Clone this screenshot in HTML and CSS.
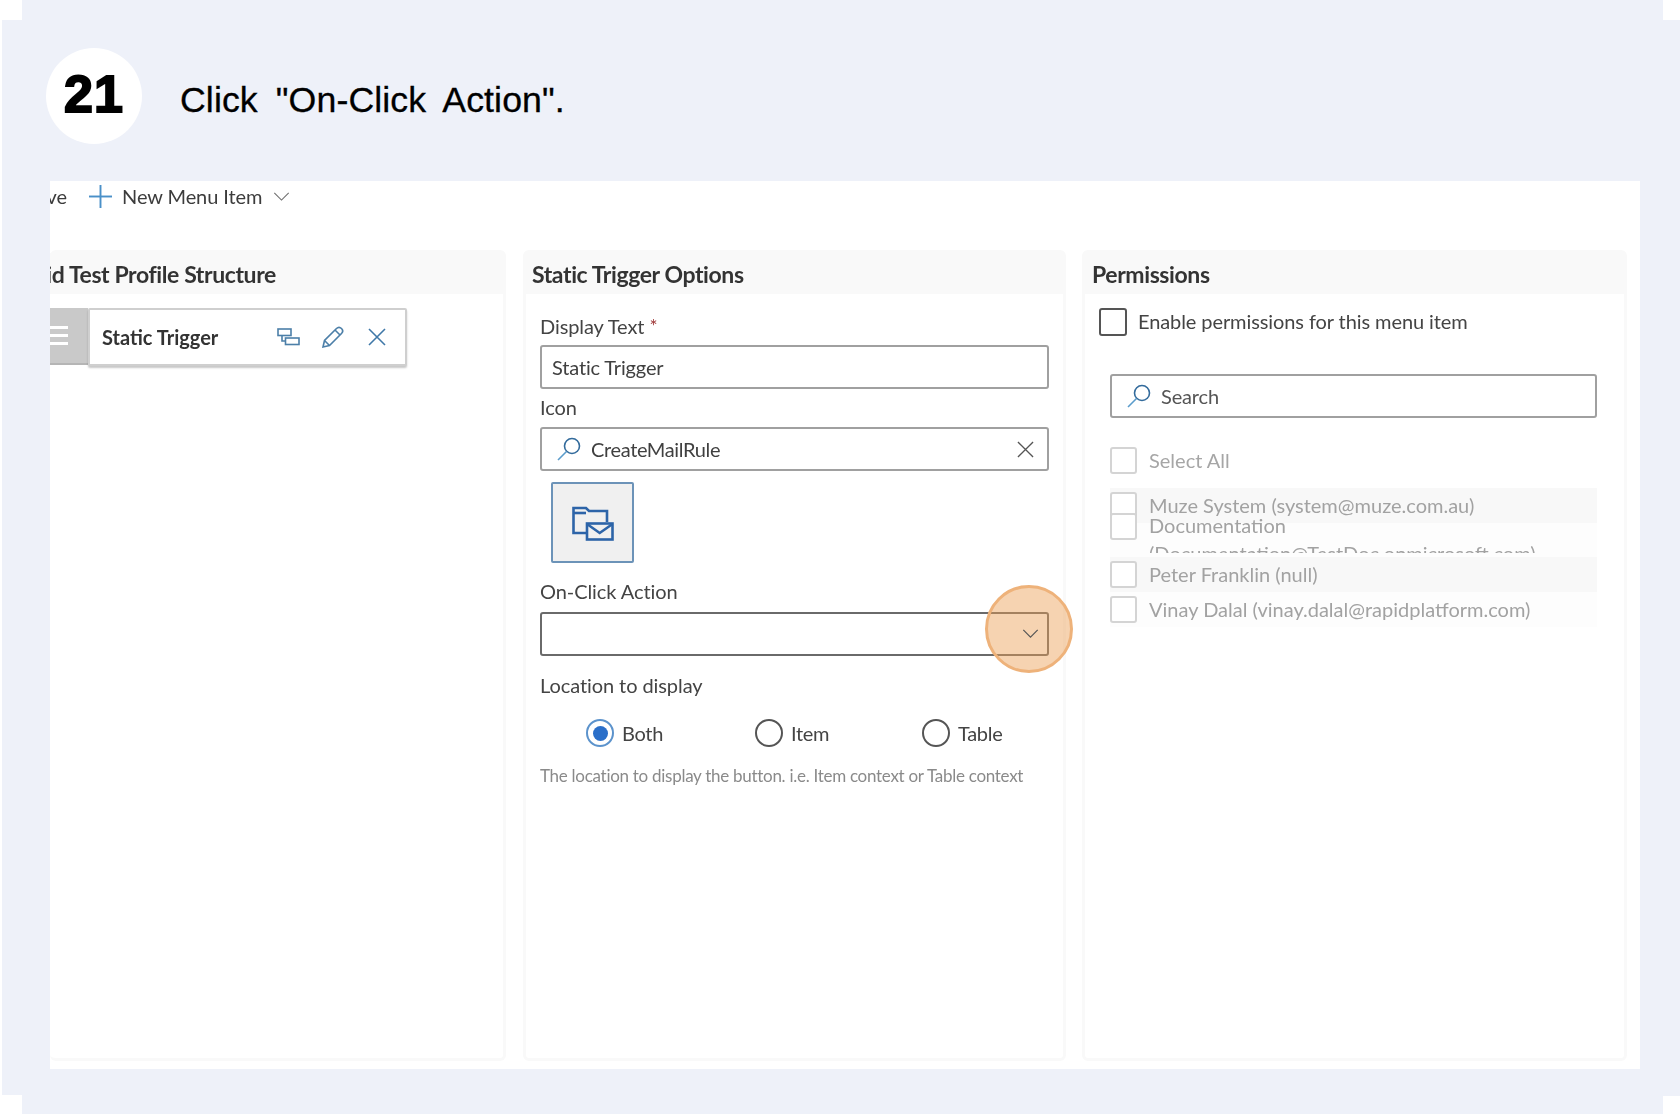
FILE: index.html
```html
<!DOCTYPE html>
<html>
<head>
    <title>Click On-Click Action</title>
    <link rel="stylesheet" href="styles.css">
</head>
<body>
    <div class="corner corner-tl"></div>
    <div class="corner corner-tr"></div>
    <div class="corner corner-bl"></div>
    <div class="corner corner-br"></div>

    <div class="page">
        <div class="step">
            <div class="step-num">21</div>
            <div class="step-title">Click "On-Click Action".</div>
        </div>

        <div class="shot">
            <div class="toolbar">
                <span class="save">Save</span>
                <svg class="ico-plus" viewBox="0 0 24 24"><path d="M0 12H24" stroke="#4a90c8"/><path d="M12 0V24" stroke="#4a90c8"/></svg>
                <span class="new-item">New Menu Item</span>
                <svg class="ico-chev" viewBox="0 0 18 10"><path d="M1 1L9 9L17 1"/></svg>
            </div>

            <div class="cols">
                <div class="col col-tree">
                    <div class="col-head"><span class="clipped-title">Grid Test Profile Structure</span></div>
                    <div class="tree-row">
                        <div class="handle"><i></i><i></i><i></i></div>
                        <div class="tree-item">
                            <span class="tree-name">Static Trigger</span>
                            <svg class="ico-tree" viewBox="0 0 23 18"><rect x="1" y="1" width="13" height="6.5"/><rect x="8.5" y="10" width="13.5" height="6.5"/><path d="M5 7.5V13H8.5"/></svg>
                            <svg class="ico-pencil" viewBox="0 0 23 23"><path d="M2 21L3.5 14.5L15.5 2.5C17 1 19 1 20.5 2.5C22 4 22 6 20.5 7.5L8.5 19.5Z"/><path d="M14 4L19 9"/><path d="M3.5 14.5L8.5 19.5"/></svg>
                            <svg class="ico-x" viewBox="0 0 18 18"><path d="M1 1L17 17M17 1L1 17"/></svg>
                        </div>
                    </div>
                </div>

                <div class="col col-options">
                    <div class="col-head">Static Trigger Options</div>
                    <div class="col-body">
                        <label class="lbl lbl-first">Display Text <em>*</em></label>
                        <div class="input">Static Trigger</div>
                        <label class="lbl lbl-icon">Icon</label>
                        <div class="input input-search">
                            <svg class="ico-search" viewBox="0 0 24 24"><circle cx="15" cy="9" r="7.5"/><path class="handle-line" d="M9.5 14.5L1 23"/></svg>
                            <span class="grow">CreateMailRule</span>
                            <svg class="ico-clear" viewBox="0 0 18 18"><path d="M1 1L17 17M17 1L1 17"/></svg>
                        </div>
                        <div class="preview">
                            <svg viewBox="0 0 42 36"><path d="M15 28H1.5V3H14L17 6H35V17"/><path d="M1.5 8H14"/><rect x="15" y="18.5" width="25.5" height="16"/><path d="M15 19L27.7 28L40.5 19"/></svg>
                        </div>
                        <label class="lbl lbl-action">On-Click Action</label>
                        <div class="input input-select">
                            <svg class="ico-select" viewBox="0 0 18 10"><path d="M1 1L9 9L17 1"/></svg>
                            <div class="hotspot"></div>
                        </div>
                        <label class="lbl lbl-location">Location to display</label>
                        <div class="radios">
                            <div class="radio-opt"><span class="radio on"></span>Both</div>
                            <div class="radio-opt"><span class="radio"></span>Item</div>
                            <div class="radio-opt"><span class="radio"></span>Table</div>
                        </div>
                        <div class="help">The location to display the button. i.e. Item context or Table context</div>
                    </div>
                </div>

                <div class="col col-perms">
                    <div class="col-head">Permissions</div>
                    <div class="col-body">
                        <div class="enable"><span class="check check-dark"></span><span class="check-text">Enable permissions for this menu item</span></div>
                        <div class="input input-search perm-search">
                            <svg class="ico-search" viewBox="0 0 24 24"><circle cx="15" cy="9" r="7.5"/><path class="handle-line" d="M9.5 14.5L1 23"/></svg>
                            <span>Search</span>
                        </div>
                        <div class="select-all"><span class="check"></span><span class="check-text">Select All</span></div>
                        <div class="users">
                            <div class="user shade"><span class="check"></span><span class="check-text">Muze System (system@muze.com.au)</span></div>
                            <div class="user user-long">
                                <div class="user-long-in">
                                    <span class="check"></span>
                                    <div class="user-clip">Documentation<br>(Documentation@TestDoc.onmicrosoft.com)</div>
                                </div>
                            </div>
                            <div class="user shade"><span class="check"></span><span class="check-text">Peter Franklin (null)</span></div>
                            <div class="user"><span class="check"></span><span class="check-text">Vinay Dalal (vinay.dalal@rapidplatform.com)</span></div>
                        </div>
                    </div>
                </div>
            </div>
        </div>
    </div>
</body>
</html>
```

FILE: styles.css
```css
* {
    box-sizing: border-box;
}

html, body {
    margin: 0;
    padding: 0;
}

body {
    width: 1680px;
    height: 1114px;
    overflow: hidden;
    background-color: #fff;
    position: relative;
    font-family: Lato, "Open Sans", sans-serif;
    font-size: 20px;
    color: #3c3c3c;
}

.corner {
    position: absolute;
    background-color: #fff;
    z-index: 2;
}
.corner-tl { left: 0; top: 0; width: 22px; height: 20px; }
.corner-tr { right: 0; top: 0; width: 17px; height: 20px; }
.corner-bl { left: 0; bottom: 0; width: 22px; height: 19px; }
.corner-br { right: 0; bottom: 0; width: 17px; height: 18px; }

.page {
    margin-left: 2px;
    height: 1114px;
    background-color: #eef1f9;
}

.step {
    height: 181px;
    padding: 48px 0 0 44px;
    display: flex;
    align-items: flex-start;
}

.step-num {
    width: 96px;
    height: 96px;
    border-radius: 50%;
    background-color: #fff;
    color: #000;
    font-family: "Liberation Sans", Arial, sans-serif;
    font-size: 52px;
    font-weight: bold;
    -webkit-text-stroke: 2px #000;
    letter-spacing: 1px;
    text-align: center;
    line-height: 93px;
}

.step-title {
    margin: 31px 0 0 38px;
    font-family: "Liberation Sans", Arial, sans-serif;
    font-size: 35.7px;
    line-height: 42px;
    color: #000;
    letter-spacing: 0.1px;
    word-spacing: 8px;
    -webkit-text-stroke: 0.3px #000;
}

.shot {
    margin-left: 48px;
    width: 1590px;
    height: 888px;
    background-color: #fff;
    overflow: hidden;
    filter: blur(0.5px);
}

.toolbar {
    height: 30px;
    display: flex;
    align-items: center;
    white-space: nowrap;
}

.save {
    margin-left: -24px;
}

.new-item {
    letter-spacing: -0.1px;
}

.ico-plus {
    width: 23px;
    height: 23px;
    margin: 0 10px 0 22px;
    stroke-width: 2;
}

.ico-chev {
    width: 17px;
    height: 9px;
    margin-left: 11px;
    fill: none;
    stroke: #6f6f6f;
    stroke-width: 1.2;
}

.cols {
    margin-top: 39px;
    height: 811px;
    display: flex;
    gap: 17px;
    padding-right: 14px;
}

.col {
    flex: none;
    width: 543px;
    border: 3px solid #f9f9f9;
    border-radius: 6px;
}
.col-tree {
    width: 456px;
    border-left: 0;
}
.col-perms {
    width: 545px;
    margin-left: -1px;
}

.col-head {
    height: 41px;
    background-color: #f9f9f9;
    padding: 0 0 0 6px;
    font-size: 23px;
    font-weight: 700;
    letter-spacing: -0.4px;
    line-height: 43px;
    color: #333;
    white-space: nowrap;
}
.col-tree .col-head {
    padding-left: 0;
}
.col-perms .col-head {
    padding-left: 7px;
}

.clipped-title {
    margin-left: -28px;
}

.tree-row {
    margin-top: 14px;
    display: flex;
}

.handle {
    width: 38px;
    height: 57px;
    background-color: #c9c9c9;
    display: flex;
    flex-direction: column;
    justify-content: center;
    gap: 5px;
    border-bottom: 2px solid #b5b5b5;
}
.handle i {
    display: block;
    width: 18px;
    height: 3px;
    background-color: #fff;
}

.tree-item {
    width: 319px;
    height: 58px;
    border: 2px solid #cfcfcf;
    border-radius: 2px;
    box-shadow: 0 2px 2px rgba(0, 0, 0, 0.22);
    background-color: #fff;
    display: flex;
    align-items: center;
    padding-left: 12px;
}

.tree-name {
    font-weight: 700;
    width: 175px;
    color: #333;
}

.ico-tree {
    width: 23px;
    height: 18px;
    fill: none;
    stroke: #4c7fa8;
    stroke-width: 1.6;
}
.ico-pencil {
    width: 23px;
    height: 23px;
    margin-left: 21px;
    fill: none;
    stroke: #4c7fa8;
    stroke-width: 1.6;
}
.ico-x {
    width: 18px;
    height: 18px;
    margin-left: 24px;
    fill: none;
    stroke: #3f78a8;
    stroke-width: 1.6;
}

.col-body {
    padding: 0 14px;
}

.lbl {
    display: block;
    height: 26px;
    line-height: 23px;
    letter-spacing: -0.08px;
    color: #444;
}
.lbl em {
    color: #a03a3a;
    font-style: normal;
    font-size: 19px;
    vertical-align: 1px;
}
.lbl-first { margin-top: 20px; margin-bottom: 5px; }
.lbl-icon { margin-top: 7px; margin-bottom: 5px; }
.lbl-action { margin-top: 17px; margin-bottom: 6px; }
.lbl-location { margin-top: 18px; }

.input {
    width: 509px;
    height: 44px;
    border: 2px solid #a0a0a0;
    border-radius: 3px;
    background-color: #fff;
    display: flex;
    align-items: center;
    padding-left: 10px;
    letter-spacing: -0.15px;
    color: #404040;
}

.input-search {
    padding-left: 15px;
}

.ico-search {
    width: 24px;
    height: 24px;
    margin-right: 10px;
    fill: none;
    stroke: #336b9c;
    stroke-width: 1.6;
}
.handle-line {
    stroke: #5a9ccc;
}

.grow {
    flex: 1;
    letter-spacing: -0.35px;
}

.ico-clear {
    width: 17px;
    height: 17px;
    margin-right: 13px;
    fill: none;
    stroke: #555;
    stroke-width: 1.4;
}

.preview {
    width: 83px;
    height: 81px;
    margin: 11px 0 0 11px;
    border: 2px solid #6c93b8;
    border-radius: 2px;
    background-color: #f0f0f0;
    display: flex;
    align-items: center;
    justify-content: center;
}
.preview svg {
    width: 42px;
    height: 36px;
    fill: none;
    stroke: #2d64a8;
    stroke-width: 2.6;
}

.input-select {
    position: relative;
    border-color: #6a6a6a;
}

.ico-select {
    position: absolute;
    z-index: 2;
    right: 8px;
    top: 15px;
    width: 17px;
    height: 9px;
    fill: none;
    stroke: #555;
    stroke-width: 1.3;
}

.hotspot {
    position: absolute;
    right: -26px;
    top: -29px;
    width: 88px;
    height: 88px;
    border-radius: 50%;
    background-color: rgba(236, 158, 82, 0.45);
    border: 3px solid #eeb27a;
}

.radios {
    margin: 19px 0 0 46px;
    display: grid;
    grid-template-columns: 169px 167px auto;
}

.radio-opt {
    display: flex;
    align-items: center;
    gap: 8px;
    height: 28px;
    letter-spacing: -0.3px;
    color: #444;
}

.radio {
    width: 28px;
    height: 28px;
    border: 2px solid #555;
    border-radius: 50%;
    background-color: #fff;
    display: flex;
    align-items: center;
    justify-content: center;
}
.radio.on {
    border-color: #5c93cc;
}
.radio.on::after {
    content: "";
    width: 15px;
    height: 15px;
    border-radius: 50%;
    background-color: #2b6fc9;
}

.help {
    margin-top: 17px;
    font-size: 17px;
    letter-spacing: -0.28px;
    line-height: 24px;
    color: #8a8a8a;
    white-space: nowrap;
}

.enable {
    margin-top: 14px;
    display: flex;
    align-items: center;
    gap: 11px;
    height: 28px;
    letter-spacing: -0.09px;
    line-height: 26px;
    color: #444;
}

.check {
    flex: none;
    width: 27px;
    height: 27px;
    border: 2px solid #d4d4d4;
    border-radius: 3px;
    background-color: #fff;
}
.check-dark {
    width: 28px;
    height: 28px;
    border-color: #555;
}

.check-text {
    margin-top: -2px;
}

.perm-search {
    width: 487px;
    margin: 38px 0 0 11px;
}
.perm-search span {
    color: #555;
}

.select-all {
    margin: 29px 0 0 11px;
    height: 27px;
    display: flex;
    align-items: center;
    gap: 12px;
    color: #a6a6a6;
}

.users {
    margin: 14px 0 0 11px;
    width: 487px;
}

.user {
    height: 35px;
    display: flex;
    align-items: center;
    gap: 12px;
    color: #a2a2a2;
    background-color: #fdfdfd;
    white-space: nowrap;
}
.user.shade {
    background-color: #f8f8f8;
}
.user-long {
    height: 34px;
    align-items: flex-start;
}
.user-long-in {
    margin-top: -10px;
    display: flex;
    gap: 12px;
}
.user-clip {
    height: 42px;
    margin-top: -2px;
    margin-bottom: 0;
    overflow: hidden;
    line-height: 28px;
}
```
